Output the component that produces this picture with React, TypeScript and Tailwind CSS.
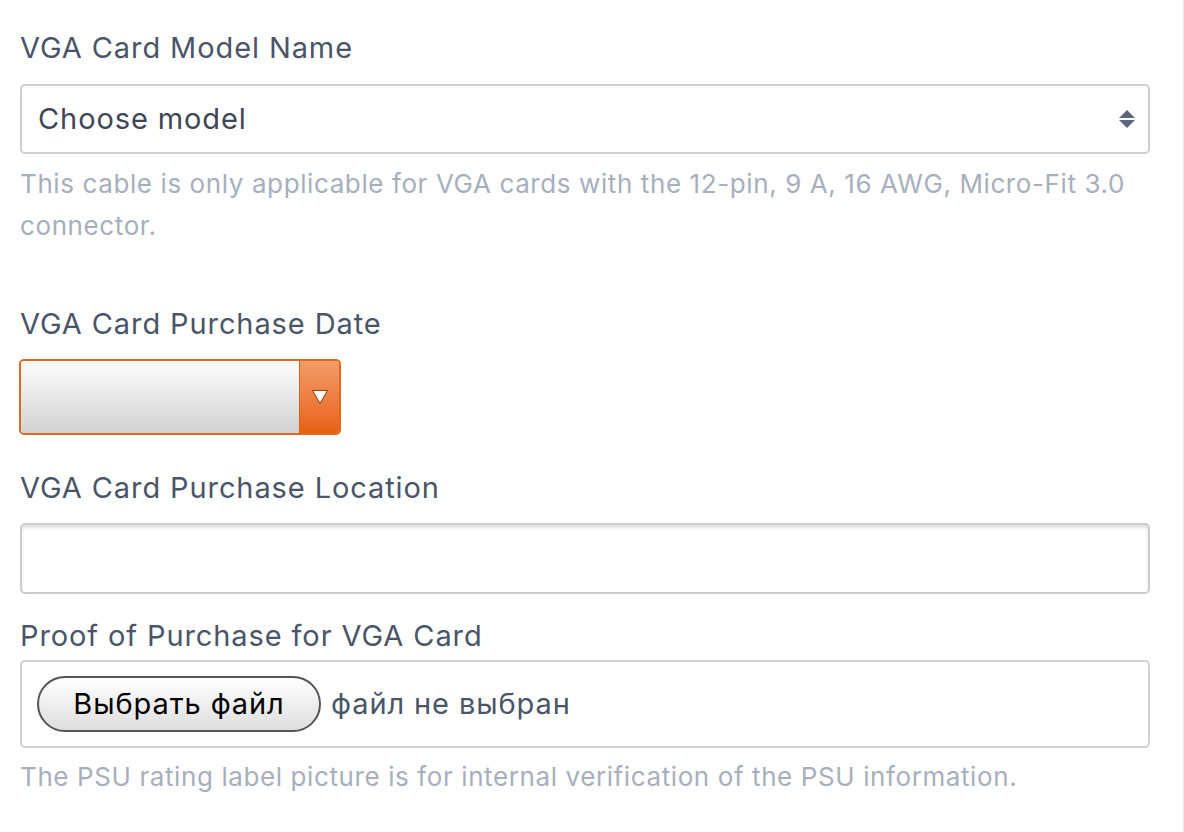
import React from "react";

const font = { fontFamily: "Inter, 'Noto Sans', sans-serif" };

function Label({ children, className = "" }: { children: React.ReactNode; className?: string }) {
  return (
    <div className={`text-[29px] leading-[40px] tracking-[0.9px] text-[#4a5568] ${className}`}>{children}</div>
  );
}

export default function App() {
  return (
    <div className="w-[1184px] h-[832px] bg-white overflow-hidden border-r border-[#e8e8e8]" style={font}>
      <div className="w-[1130px] ml-[20px] pt-[28px]">
        {/* Model */}
        <Label>VGA Card Model Name</Label>
        <div className="mt-[16px] h-[70px] border-2 border-[#cfcfcf] rounded-[5px] flex items-center justify-between pl-[16px] pr-[12px]">
          <span className="text-[29px] tracking-[0.9px] text-[#3f4756]">Choose model</span>
          <svg width="18" height="20" viewBox="0 0 18 20">
            <path d="M9 1 L17 9 L1 9 Z" fill="#5b657c" />
            <path d="M1 11 L17 11 L9 19 Z" fill="#5b657c" />
          </svg>
        </div>
        <p className="mt-[9px] text-[26px] leading-[42px] tracking-[0.6px] text-[#a7afbd]">
          This cable is only applicable for VGA cards with the 12-pin, 9 A, 16 AWG, Micro-Fit 3.0 connector.
        </p>

        {/* Purchase date */}
        <Label className="mt-[57px]">VGA Card Purchase Date</Label>
        <div className="mt-[15px] -ml-px w-[322px] h-[76px] flex border-2 border-[#dd6a22] rounded-[5px] overflow-hidden">
          <div className="flex-1 bg-gradient-to-b from-[#fdfdfd] to-[#d2d2d2]" />
          <div className="w-[40px] flex items-center justify-center bg-gradient-to-b from-[#f29c66] to-[#e8600c] border-l border-[#d0661f]">
            <svg width="18" height="16" viewBox="0 0 18 16">
              <path d="M1.5 1.5 L16.5 1.5 L9 14.5 Z" fill="#ffffff" stroke="#8a3a0a" strokeWidth="1" strokeLinejoin="round" />
            </svg>
          </div>
        </div>

        {/* Purchase location */}
        <Label className="mt-[33px]">VGA Card Purchase Location</Label>
        <div className="mt-[15px] h-[71px] border-2 border-[#cccccc] rounded-[5px] bg-white shadow-[inset_0_3px_3px_rgba(0,0,0,0.12)]" />

        {/* Proof */}
        <Label className="mt-[22px]">Proof of Purchase for VGA Card</Label>
        <div className="mt-[4px] h-[88px] border-2 border-[#d2d2d2] rounded-[5px] flex items-center pl-[15px]">
          <div className="w-[284px] h-[56px] rounded-full border-2 border-[#555555] bg-gradient-to-b from-[#ffffff] to-[#dedede] flex items-center justify-center text-[29px] tracking-[0.9px] text-black">
            Выбрать файл
          </div>
          <span className="ml-[10px] text-[29px] tracking-[0.9px] text-[#4a5568]">файл не выбран</span>
        </div>
        <p className="mt-[8px] text-[26px] leading-[42px] tracking-[0.6px] text-[#a7afbd]">
          The PSU rating label picture is for internal verification of the PSU information.
        </p>
      </div>
    </div>
  );
}
